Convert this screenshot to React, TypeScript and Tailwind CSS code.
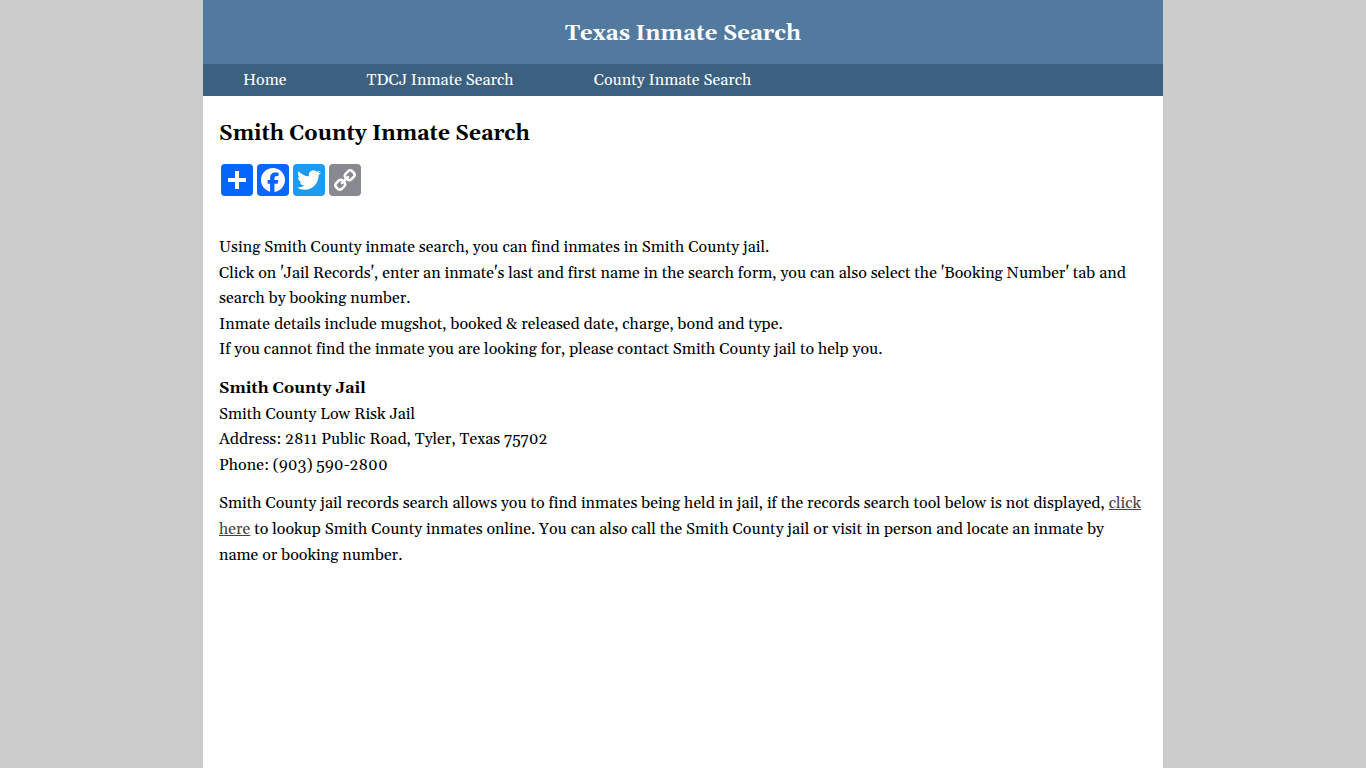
import type { ReactNode } from "react";

const navItems = ["Home", "TDCJ Inmate Search", "County Inmate Search"];

function ShareLink({ label, color, children }: { label: string; color: string; children: ReactNode }) {
  return (
    <a href="#" aria-label={label} className={`block size-8 rounded ${color}`}>
      <svg viewBox="0 0 32 32" className="size-8" fill="#fff" fillRule="evenodd" aria-hidden="true">
        {children}
      </svg>
    </a>
  );
}

export default function App() {
  return (
    <div className="min-h-screen bg-[#cccccc] font-[Georgia,Gelasio,'Liberation_Serif',serif] text-base leading-[1.6] text-black [font-variant-ligatures:none]">
      <div className="mx-auto flex min-h-screen max-w-[960px] flex-col bg-white">
        <header className="bg-[#52799e] pt-[18px] pb-[14px] text-center text-white">
          <div className="text-[22px] leading-8 font-bold">Texas Inmate Search</div>
        </header>
        <nav className="bg-[#3c6080]">
          <ul className="flex flex-wrap">
            {navItems.map((item) => (
              <li key={item}>
                <a href="#" className="block px-10 leading-8 text-white">
                  {item}
                </a>
              </li>
            ))}
          </ul>
        </nav>
        <main className="px-4 pt-[22px]">
          <h1 className="text-[21px] leading-8 font-bold">Smith County Inmate Search</h1>
          <div className="mt-[14px] mb-[39px] flex gap-1 px-0.5">
            <ShareLink label="Share" color="bg-[#0166ff]">
              <path d="M14 7h4v18h-4z" />
              <path d="M7 14h18v4H7z" />
            </ShareLink>
            <ShareLink label="Facebook" color="bg-[#0866ff]">
              <path d="M28 16c0-6.627-5.373-12-12-12S4 9.373 4 16c0 5.628 3.875 10.35 9.101 11.647v-7.98h-2.474V16H13.1v-1.58c0-4.085 1.849-5.978 5.859-5.978.76 0 2.072.15 2.608.298v3.325c-.283-.03-.775-.045-1.386-.045-1.967 0-2.728.745-2.728 2.683V16h3.92l-.673 3.667h-3.247v8.245C23.395 27.195 28 22.135 28 16" />
            </ShareLink>
            <ShareLink label="Twitter" color="bg-[#1d9bf0]">
              <path d="M28 8.557a10 10 0 0 1-2.828.775 4.93 4.93 0 0 0 2.166-2.725 9.7 9.7 0 0 1-3.13 1.194 4.92 4.92 0 0 0-3.593-1.55 4.924 4.924 0 0 0-4.794 6.049c-4.09-.21-7.72-2.17-10.15-5.15a4.94 4.94 0 0 0-.665 2.477c0 1.71.87 3.214 2.19 4.1a5 5 0 0 1-2.23-.616v.06c0 2.39 1.7 4.38 3.952 4.83-.414.115-.85.174-1.297.174q-.476-.001-.928-.086a4.935 4.935 0 0 0 4.6 3.42 9.9 9.9 0 0 1-6.114 2.107q-.597 0-1.175-.068a13.95 13.95 0 0 0 7.55 2.213c9.056 0 14.01-7.507 14.01-14.013q0-.32-.015-.637c.96-.695 1.795-1.56 2.455-2.55z" />
            </ShareLink>
            <ShareLink label="Copy Link" color="bg-[#888990]">
              <path d="M7.591 21.177c0-.36.126-.665.377-.917l2.804-2.804a1.235 1.235 0 0 1 .913-.378c.377 0 .7.144.97.43-.026.028-.11.11-.255.25-.144.14-.24.236-.29.29a2.82 2.82 0 0 0-.2.256 1.056 1.056 0 0 0-.177.344 1.43 1.43 0 0 0-.046.37c0 .36.126.666.377.918a1.25 1.25 0 0 0 .918.377c.126.001.251-.015.373-.047.125-.037.242-.096.345-.175.09-.06.176-.127.256-.2.1-.094.196-.19.29-.29.14-.142.223-.23.25-.254.297.28.445.607.445.984 0 .36-.126.664-.377.916l-2.778 2.79a1.242 1.242 0 0 1-.917.364c-.36 0-.665-.118-.917-.35l-1.982-1.97a1.223 1.223 0 0 1-.378-.9l-.001-.004Zm9.477-9.504c0-.36.126-.665.377-.917l2.777-2.79a1.235 1.235 0 0 1 .913-.378c.35 0 .656.12.917.364l1.984 1.968c.254.252.38.553.38.903 0 .36-.126.665-.38.917l-2.802 2.804a1.238 1.238 0 0 1-.916.364c-.377 0-.7-.14-.97-.418.026-.027.11-.11.255-.25a7.5 7.5 0 0 0 .29-.29c.072-.08.139-.166.2-.255.08-.103.14-.22.176-.344.032-.12.048-.245.047-.37 0-.36-.126-.662-.377-.914a1.247 1.247 0 0 0-.917-.377c-.136 0-.26.015-.37.046-.114.03-.23.09-.346.175a3.868 3.868 0 0 0-.256.2c-.054.05-.15.148-.29.29-.14.146-.222.23-.25.258-.294-.278-.442-.606-.442-.983v-.003ZM5.003 21.177c0 1.078.382 1.99 1.146 2.736l1.982 1.968c.745.75 1.658 1.12 2.736 1.12 1.087 0 2.004-.38 2.75-1.143l2.777-2.79c.75-.747 1.12-1.66 1.12-2.737 0-1.106-.392-2.046-1.183-2.818l1.186-1.185c.774.79 1.708 1.186 2.805 1.186 1.078 0 1.995-.376 2.75-1.13l2.803-2.81c.751-.754 1.128-1.671 1.128-2.748 0-1.08-.382-1.993-1.146-2.738L23.875 6.12C23.13 5.372 22.218 5 21.139 5c-1.087 0-2.004.382-2.75 1.146l-2.777 2.79c-.75.747-1.12 1.66-1.12 2.737 0 1.105.392 2.045 1.183 2.817l-1.186 1.186c-.774-.79-1.708-1.186-2.805-1.186-1.078 0-1.995.377-2.75 1.132L6.13 18.426c-.754.755-1.13 1.672-1.13 2.75l.003.001Z" />
            </ShareLink>
          </div>
          <div className="flex flex-col gap-[13px]">
            <p>
              Using Smith County inmate search, you can find inmates in Smith County jail.
              <br />
              Click on 'Jail Records', enter an inmate's last and first name in the search form, you can also select the
              'Booking Number' tab and search by booking number.
              <br />
              Inmate details include mugshot, booked &amp; released date, charge, bond and type.
              <br />
              If you cannot find the inmate you are looking for, please contact Smith County jail to help you.
            </p>
            <p>
              <strong>Smith County Jail</strong>
              <br />
              Smith County Low Risk Jail
              <br />
              Address: 2811 Public Road, Tyler, Texas 75702
              <br />
              Phone: (903) 590-2800
            </p>
            <p>
              Smith County jail records search allows you to find inmates being held in jail, if the records search tool
              below is not displayed,{" "}
              <a href="#" className="text-[#444444] underline">
                click here
              </a>{" "}
              to lookup Smith County inmates online. You can also call the Smith County jail or visit in person and
              locate an inmate by name or booking number.
            </p>
          </div>
        </main>
      </div>
    </div>
  );
}
